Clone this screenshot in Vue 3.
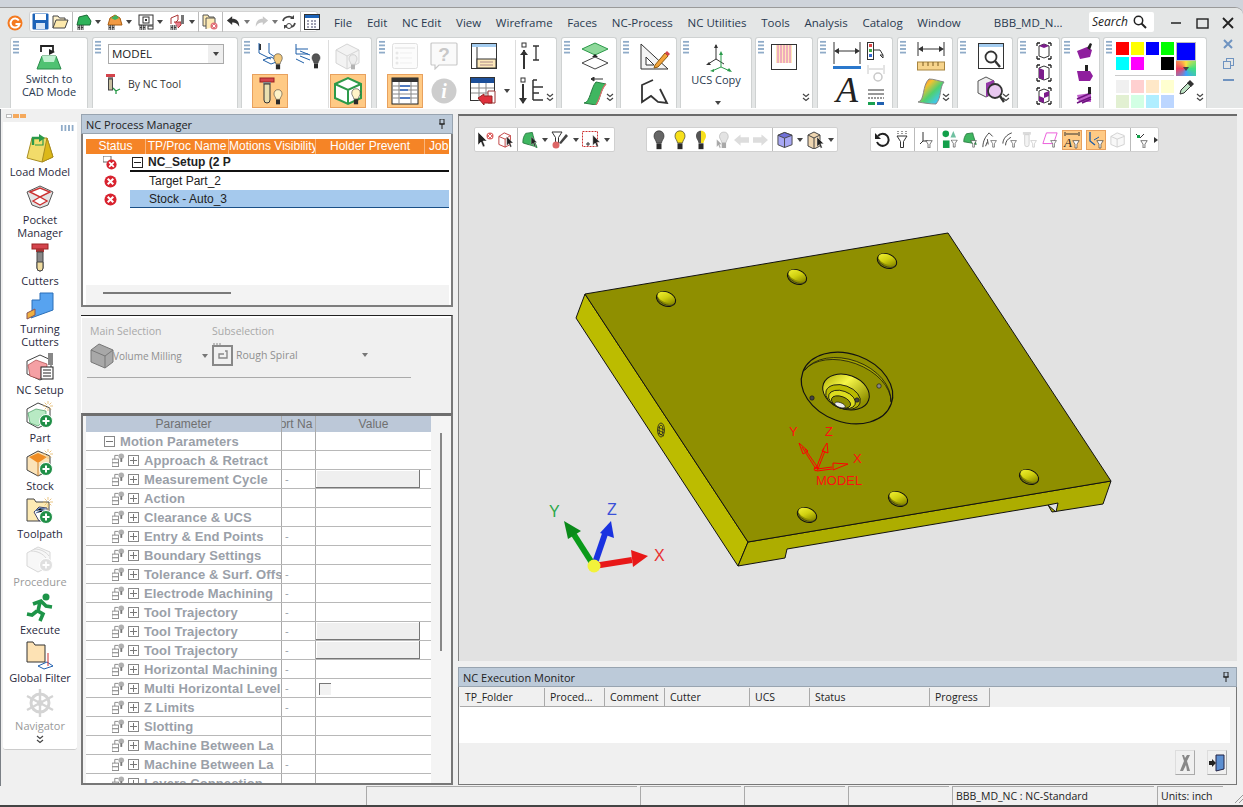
<script setup>
const menus = ['File', 'Edit', 'NC Edit', 'View', 'Wireframe', 'Faces', 'NC-Process', 'NC Utilities', 'Tools', 'Analysis', 'Catalog', 'Window']
const palette = ['#ff0000', '#ffff00', '#0000ff', '#00ff00', '#00ffff', '#ff00ff', '#ffffff', '#000000']
const pastels = ['#f0f0f0', '#ffd0d0', '#ffe8c8', '#ffffd0', '#e2f0d2', '#d2ffe4', '#b0eeff', '#bcd6ff']

const params = [
  { name: 'Approach & Retract' },
  { name: 'Measurement Cycle', port: '-', btn: true },
  { name: 'Action' },
  { name: 'Clearance & UCS' },
  { name: 'Entry & End Points', port: '-' },
  { name: 'Boundary Settings' },
  { name: 'Tolerance & Surf. Offs', port: '-' },
  { name: 'Electrode Machining', port: '-' },
  { name: 'Tool Trajectory', port: '-' },
  { name: 'Tool Trajectory', port: '-', btn: true },
  { name: 'Tool Trajectory', port: '-', btn: true },
  { name: 'Horizontal Machining', port: '-' },
  { name: 'Multi Horizontal Level', port: '-', check: true },
  { name: 'Z Limits', port: '-' },
  { name: 'Slotting' },
  { name: 'Machine Between La' },
  { name: 'Machine Between La', port: '-' },
  { name: 'Layers Connection', port: '-' }
]

const holes = [[666, 299], [797, 277], [887, 261], [1029, 477], [898, 499], [807, 515]]

const monitorCols = [
  { name: 'TP_Folder', cls: 'm1' },
  { name: 'Proced...', cls: 'm2' },
  { name: 'Comment', cls: 'm2' },
  { name: 'Cutter', cls: 'm3' },
  { name: 'UCS', cls: 'm2' },
  { name: 'Status', cls: 'm4' },
  { name: 'Progress', cls: 'm2' }
]
</script>

<template>
  <div class="app">
    <svg class="defs" width="0" height="0">
      <symbol id="bulb" viewBox="0 0 14 24">
        <path d="M7 1C3 1 1 4 1 7.500c0 3 2.500 4.500 3 8h6c.5-3.500 3-5 3-8C13 4 11 1 7 1z" fill="currentColor" stroke="#333" stroke-width=".8" />
        <rect x="4" y="16" width="6" height="7" fill="#2b2b2b" />
      </symbol>
      <symbol id="filter" viewBox="0 0 12 14">
        <path d="M1 1h10L7.500 6.500v6h-3v-6z" fill="#fff" stroke="#333" />
      </symbol>
      <symbol id="more" viewBox="0 0 8 9">
        <path d="M1 1l3 2.500L7 1M1 5l3 2.500L7 5" fill="none" stroke="#444" stroke-width="1.200" />
      </symbol>
      <symbol id="errx" viewBox="0 0 14 14">
        <circle cx="7" cy="7" r="6.500" fill="#d8232f" />
        <path d="M4 4l6 6M10 4l-6 6" stroke="#fff" stroke-width="2.200" />
      </symbol>
      <symbol id="hh" viewBox="0 0 8 6">
        <path d="M1 0v6M3 0v6M1 3h2M5 0v6M7 0v6M5 3h2" stroke="#222" stroke-width="1" />
      </symbol>
      <symbol id="lever" viewBox="0 0 14 15">
        <rect x="0" y="6" width="7" height="4" fill="#fff" stroke="#888" />
        <rect x="0" y="10" width="7" height="4" fill="#fff" stroke="#888" />
        <path d="M3 6V2h4" fill="none" stroke="#888" />
        <circle cx="10" cy="3" r="3" fill="#b0b0b0" />
        <rect x="9" y="5" width="2" height="4" fill="#777" />
      </symbol>
      <symbol id="plus" viewBox="0 0 14 14">
        <circle cx="7" cy="7" r="6.500" fill="#1f8f47" stroke="#fff" />
        <path d="M3.500 7h7M7 3.500v7" stroke="#fff" stroke-width="2" />
      </symbol>
      <symbol id="spark" viewBox="0 0 12 12">
        <path d="M6 0v3.500M6 8.500V12M0 6h3.500M8.500 6H12M2 2l2.500 2.500M10 2L7.500 4.500M2 10l2.500-2.500M10 10L7.500 7.500" stroke="#e6b96a" stroke-width="1" />
      </symbol>
      <symbol id="pointer" viewBox="0 0 10 16">
        <path d="M1 0v13l3-3 2 5 2-1-2-5h4z" fill="#222" stroke="#fff" stroke-width=".5" />
      </symbol>
    </svg>

    <div class="window">
      <header class="titlebar">
        <svg class="logo" width="16" height="16" viewBox="0 0 16 16">
          <circle cx="8" cy="8" r="7.500" fill="#f47a20" />
          <path d="M11.800 5.500A4.500 4.500 0 1 0 12.500 9H8.500" fill="none" stroke="#fff" stroke-width="2" />
        </svg>
        <div class="qat">
          <svg width="17" height="17" viewBox="0 0 17 17"><rect x=".5" y=".5" width="16" height="16" rx="1" fill="#1c63b8" /><rect x="3" y="1" width="11" height="6" fill="#fff" /><rect x="4" y="10" width="9" height="6" fill="#d8e6f5" /></svg>
          <svg width="17" height="16" viewBox="0 0 17 16"><path d="M1 14V2h5l1.500 2H13v2" fill="#fdf0c8" stroke="#444" /><path d="M1 14l3-8h12l-3 8z" fill="#fde9ac" stroke="#444" /></svg>
          <i class="qsep"></i>
          <span class="qi"><svg width="16" height="16" viewBox="0 0 16 16"><path d="M1 11l2-8 8-2 4 6-1 4z" fill="#2eb35a" stroke="#1b6b35" /><use href="#hh" x="1" y="11" width="7" height="5" /></svg><i class="drop"></i></span>
          <span class="qi q2"><svg width="16" height="16" viewBox="0 0 16 16"><path d="M1 11l2-7 5-3 5 3 2 7z" fill="#f29a43" stroke="#a85c10" /><path d="M4 4l5-3 3 3-4 2z" fill="#3fb25e" /><use href="#hh" x="1" y="11" width="7" height="5" /></svg><i class="drop"></i></span>
          <span class="qi q2"><svg width="16" height="16" viewBox="0 0 16 16"><rect x="1" y="1" width="14" height="10" fill="#fff" stroke="#333" /><rect x="5" y="3" width="6" height="6" fill="none" stroke="#333" /><rect x="7" y="5" width="2" height="2" fill="#333" /><use href="#hh" x="1" y="11" width="7" height="5" /><rect x="10" y="12" width="5" height="3" fill="none" stroke="#333" /></svg><i class="drop"></i></span>
          <span class="qi q2"><svg width="17" height="16" viewBox="0 0 17 16"><path d="M2 10V4l7-3v5l-3 3" fill="#fff" stroke="#a33" /><path d="M5 8h7v3l-3 3" fill="#e97a8a" stroke="#a33" /><rect x="12" y="1" width="3" height="9" fill="#777" /><use href="#hh" x="1" y="11" width="7" height="5" /></svg><i class="drop"></i></span>
          <i class="qsep"></i>
          <svg width="17" height="16" viewBox="0 0 17 16"><path d="M1 12V1h5l1 2h5v9z" fill="#fdeab4" stroke="#555" /><path d="M4 15V4h9v9" fill="#fdeab4" stroke="#555" /><circle cx="12" cy="12" r="3.500" fill="#e0707a" /><path d="M10.500 10.500l3 3M13.500 10.500l-3 3" stroke="#fff" /></svg>
          <i class="qsep"></i>
          <span class="qi"><svg width="15" height="13" viewBox="0 0 17 14"><path d="M7 1L1 6l6 5V8c4 0 6 1 8 5 0-6-3-9-8-9z" fill="#333" /></svg><i class="drop grey"></i></span>
          <span class="qi q3"><svg width="15" height="13" viewBox="0 0 17 14"><path d="M10 1l6 5-6 5V8C6 8 4 9 2 13c0-6 3-9 8-9z" fill="#c8c8c8" /></svg><i class="drop grey"></i></span>
          <svg width="16" height="16" viewBox="0 0 16 16"><path d="M2 7a6 5 0 0 1 10-3M14 9a6 5 0 0 1-10 3" fill="none" stroke="#444" stroke-width="1.600" /><path d="M13 1v4H9zM3 15v-4h4z" fill="#444" /><circle cx="8" cy="12" r="2.500" fill="#fff" stroke="#444" /></svg>
          <i class="qsep"></i>
          <svg width="16" height="16" viewBox="0 0 16 16"><rect x=".5" y=".5" width="15" height="15" fill="#fff" stroke="#333" /><rect x="1" y="1" width="14" height="3" fill="#1c63b8" /><path d="M3 7h2M7 7h6M3 10h2M7 10h6M3 13h2M7 13h6" stroke="#446" stroke-dasharray="2 1" /></svg>
        </div>
        <nav class="menu">
          <a v-for="item in menus" :key="item">{{ item }}</a>
        </nav>
        <span class="doc-title">BBB_MD_N...</span>
        <div class="search">
          <em>Search</em>
          <svg width="14" height="14" viewBox="0 0 14 14"><circle cx="5.500" cy="5.500" r="4.200" fill="none" stroke="#222" stroke-width="1.500" /><path d="M8.500 8.500l4.500 4.500" stroke="#222" stroke-width="2" /></svg>
        </div>
        <div class="win-btns">
          <svg width="12" height="12" viewBox="0 0 12 12"><path d="M1 6h10" stroke="#222" stroke-width="1.600" /></svg>
          <svg width="13" height="12" viewBox="0 0 13 12"><rect x="1" y="2" width="11" height="9" fill="none" stroke="#222" stroke-width="1.400" /></svg>
          <svg width="12" height="12" viewBox="0 0 12 12"><path d="M1 1l10 10M11 1L1 11" stroke="#222" stroke-width="1.800" /></svg>
        </div>
      </header>

      <section class="ribbon">
        <div class="group g1">
          <i class="grip"></i>
          <svg class="key" width="30" height="27" viewBox="0 0 30 27">
            <path d="M3 25l5-13h14l5 13z" fill="#4fc272" stroke="#2b8a4b" />
            <path d="M8 12h14l-2 6H10z" fill="#bff0cf" />
            <path d="M7 8V2h12v6" fill="none" stroke="#222" stroke-width="1.800" />
            <path d="M15 5l6 3-6 3z" fill="#222" />
          </svg>
          <div class="g-label">Switch to<br>CAD Mode</div>
        </div>

        <div class="group g2">
          <i class="grip"></i>
          <div class="combo"><span>MODEL</span><b><i class="drop"></i></b></div>
          <div class="by-tool">
            <svg width="16" height="20" viewBox="0 0 16 20"><rect x="1" y="0" width="9" height="3" fill="#d4444c" /><rect x="3" y="3" width="5" height="2" fill="#888" /><rect x="3.500" y="5" width="4" height="11" fill="#c9c0a0" stroke="#444" /><path d="M8 14l3 3M11 17l4-2M11 17v3" stroke="#2a9a4a" stroke-width="1.300" /></svg>
            <span>By NC Tool</span>
          </div>
        </div>

        <div class="group g3">
          <i class="grip"></i>
          <div class="cell">
            <svg width="30" height="28" viewBox="0 0 30 28"><path d="M5 2v6" stroke="#333" stroke-width="2" /><path d="M4 1v10l12 6M14 1v10l6 4" fill="none" stroke="#1f5fa8" /><path d="M8 18l8-3 8 4-8 3z" fill="none" stroke="#1f5fa8" /><use href="#bulb" x="18" y="11" width="10" height="17" style="color:#f2c97e" /></svg>
          </div>
          <div class="cell">
            <svg width="28" height="26" viewBox="0 0 28 26"><path d="M2 1v10M2 6h12M2 11h12M2 16l8 4M6 8l10 4M6 13l10 4" fill="none" stroke="#1f5fa8" /><use href="#bulb" x="17" y="10" width="10" height="16" style="color:#555" /></svg>
          </div>
          <i class="vsep"></i>
          <div class="cell">
            <svg width="30" height="30" viewBox="0 0 30 30" opacity=".35"><path d="M3 9l11-6 12 6v13l-12 6-11-6z" fill="#ddd" stroke="#888" /><path d="M3 9l11 6 12-6M14 15v13" fill="none" stroke="#888" /><use href="#bulb" x="15" y="13" width="10" height="16" style="color:#ccc" /></svg>
          </div>
          <div class="cell on">
            <svg width="30" height="30" viewBox="0 0 30 30"><rect x="5" y="2" width="14" height="4" fill="#d4444c" stroke="#922" /><rect x="8" y="6" width="8" height="2" fill="#888" /><path d="M9 8h6v16a3 3 0 0 1-6 0z" fill="#eadfb0" stroke="#333" /><use href="#bulb" x="18" y="13" width="10" height="16" style="color:#fff3c8" /></svg>
          </div>
          <div class="cell"></div>
          <i class="vsep bare"></i>
          <div class="cell on">
            <svg width="32" height="30" viewBox="0 0 32 30"><path d="M3 8l13-6 13 6v14l-13 6-13-6z" fill="#fff" stroke="#2d9a4a" stroke-width="2" /><path d="M3 8l13 6 13-6M16 14v14" fill="none" stroke="#2d9a4a" stroke-width="2" /><use href="#bulb" x="19" y="12" width="10" height="17" style="color:#fff3c8" /></svg>
          </div>
        </div>

        <div class="group g4">
          <i class="grip"></i>
          <div class="cell">
            <svg width="26" height="26" viewBox="0 0 26 26" opacity=".45"><rect x=".5" y=".5" width="25" height="25" rx="2" fill="#fafafa" stroke="#bbb" /><path d="M3 5h20" stroke="#bbb" /><path d="M8 10h12M8 15h12M8 20h12" stroke="#ddd" /><circle cx="5" cy="10" r="1.500" fill="#ccc" /><circle cx="5" cy="15" r="1.500" fill="#ccc" /><circle cx="5" cy="20" r="1.500" fill="#ccc" /></svg>
          </div>
          <div class="cell">
            <svg width="28" height="28" viewBox="0 0 28 28"><path d="M2 1h24a1 1 0 0 1 1 1v20a1 1 0 0 1-1 1H9l-4 4v-4H2a1 1 0 0 1-1-1V2a1 1 0 0 1 1-1z" fill="#fafafa" stroke="#c8c8c8" stroke-width="1.200" /><text x="14" y="19" class="qmark">?</text></svg>
          </div>
          <div class="cell">
            <svg width="26" height="26" viewBox="0 0 26 26"><rect x=".5" y=".5" width="25" height="25" fill="#fff" stroke="#333" /><rect x="1" y="1" width="24" height="3" fill="#a3ccf0" /><path d="M6 4v21" stroke="#333" /><rect x="6" y="16" width="19" height="9" fill="#fde9ba" stroke="#333" /><path d="M9 19h13M9 22h13" stroke="#a88" /></svg>
          </div>
          <span></span>
          <i class="vsep"></i>
          <div class="cell">
            <svg width="26" height="28" viewBox="0 0 26 28"><rect x="2" y="1" width="4" height="4" fill="none" stroke="#333" /><path d="M4 8v19" stroke="#333" stroke-width="2" /><path d="M0 13l4-5 4 5z" fill="#333" /><path d="M13 4h6M16 4v14M13 18h6" stroke="#333" stroke-width="1.300" fill="none" /></svg>
          </div>
          <div class="cell on">
            <svg width="28" height="28" viewBox="0 0 28 28"><rect x="1" y="1" width="26" height="26" fill="#fff" stroke="#222" /><rect x="1" y="1" width="26" height="4" fill="#333" /><path d="M1 9h26M1 13h26M1 17h26M1 21h26M8 5v22M20 5v22" stroke="#888" /><path d="M9 9h10M9 13h8M9 21h10" stroke="#2b63c0" stroke-width="1.500" /></svg>
          </div>
          <div class="cell">
            <svg width="26" height="26" viewBox="0 0 26 26"><circle cx="13" cy="13" r="12.500" fill="#cdcdcd" /><text x="13" y="20" class="imark">i</text></svg>
          </div>
          <div class="cell">
            <svg width="28" height="28" viewBox="0 0 28 28"><rect x=".5" y=".5" width="24" height="23" fill="#fff" stroke="#333" /><rect x="1" y="1" width="23" height="5" fill="#1c4f9a" /><path d="M1 11h23M1 16h23M9 6v18M16 6v18" stroke="#888" /><path d="M18 14h7v12h-7z" fill="#fff" stroke="#933" /><path d="M8 21l6-4v2h8v7h-8v2z" fill="#e0303c" stroke="#922" /></svg>
          </div>
          <i class="drop side"></i>
          <i class="vsep bare"></i>
          <div class="cell">
            <svg width="28" height="28" viewBox="0 0 28 28"><rect x="2" y="1" width="4" height="4" fill="none" stroke="#333" /><path d="M4 7v19" stroke="#333" stroke-width="2" /><path d="M0 21l4 6 4-6z" fill="#333" /><path d="M14 3v20M14 3h4M14 10h10M14 16h6M14 23h10" stroke="#333" stroke-width="1.500" fill="none" /></svg>
          </div>
          <svg class="more" width="8" height="9"><use href="#more" /></svg>
        </div>

        <div class="group g5">
          <i class="grip"></i>
          <div class="icol">
            <svg width="28" height="28" viewBox="0 0 28 28"><path d="M1 7l13-6 13 6-13 6z" fill="#8ed89a" stroke="#2d9a4a" /><path d="M14 13v8" stroke="#222" stroke-width="1.500" /><path d="M11 15l3-3 3 3z" fill="#222" /><path d="M1 21l13-6 13 6-13 6z" fill="#fff" stroke="#444" /></svg>
            <svg width="26" height="28" viewBox="0 0 26 28"><path d="M2 26c6 0 7-16 12-21l10 2c-6 6-5 14-10 21z" fill="#3fb660" stroke="#2a7d43" /><path d="M24 7c-6 6-5 14-10 21" fill="none" stroke="#e07070" stroke-width="1.200" /><path d="M9 2h12M9 2l3-2v4z" stroke="#333" fill="#333" /></svg>
          </div>
          <svg class="more" width="8" height="9"><use href="#more" /></svg>
        </div>

        <div class="group g6">
          <i class="grip"></i>
          <div class="icol">
            <svg width="30" height="28" viewBox="0 0 30 28"><path d="M1 1v25h27z" fill="#f4f4f4" stroke="#333" /><path d="M6 14v8h8z" fill="#fff" stroke="#333" /><path d="M15 22l10-12 3 3-10 11-4 1z" fill="#f2a33a" stroke="#8a5a10" /><path d="M25 10l2-2 3 3-2 2z" fill="#d4444c" /></svg>
            <svg width="30" height="26" viewBox="0 0 30 26"><path d="M13 2L2 7v17l9-6 7 6 9 1-7-14" fill="none" stroke="#333" stroke-width="1.800" /></svg>
          </div>
        </div>

        <div class="group g7">
          <i class="grip"></i>
          <svg class="ucs" width="28" height="30" viewBox="0 0 28 30"><path d="M11 2v14M11 16L3 21M11 16l8 5" stroke="#333" fill="none" /><path d="M9 5l2-4 2 4zM1 22l3-3 2 3z" fill="#333" /><path d="M16 10v14M16 24l-9 4M16 24l9 4" stroke="#2a9a4a" fill="none" /><path d="M14 12l2-4 2 4zM5 28l4-2 0 3zM27 29l-5-1 2-3z" fill="#2a9a4a" /></svg>
          <div class="g-label">UCS Copy</div>
          <i class="drop ucs-drop"></i>
        </div>

        <div class="group g8">
          <i class="grip"></i>
          <svg class="solo" width="26" height="26" viewBox="0 0 26 26"><rect x=".5" y=".5" width="25" height="25" fill="#fff" stroke="#333" /><rect x="5" y="1" width="16" height="18" fill="#ffe9b8" /><path d="M7 1v18M10 1v18M13 1v18M16 1v18M19 1v18" stroke="#e070c0" /></svg>
          <svg class="more" width="8" height="9"><use href="#more" /></svg>
        </div>

        <div class="group g9">
          <i class="grip"></i>
          <div class="icol wide">
            <svg width="28" height="28" viewBox="0 0 28 28"><path d="M1 0v22M27 0v22" stroke="#333" /><path d="M3 9h22" stroke="#333" /><path d="M1 9l5-3v6zM27 9l-5-3v6z" fill="#333" /><rect y="24" width="28" height="3" fill="#2a78cc" /></svg>
            <span class="big-a">A</span>
          </div>
          <div class="icol narrow">
            <svg width="18" height="18" viewBox="0 0 18 18"><rect x=".5" y=".5" width="6" height="17" fill="#fff" stroke="#333" /><rect x="2" y="2" width="3" height="3" fill="#d44" /><rect x="2" y="7" width="3" height="3" fill="#4a4" /><rect x="2" y="12" width="3" height="3" fill="#36c" /><path d="M7 8h6l3 5M16 13l-3 0 3 3z" stroke="#333" fill="none" /></svg>
            <svg width="18" height="18" viewBox="0 0 18 18" opacity=".35"><path d="M1 0v9M17 0v9M2 4h14" stroke="#666" /><circle cx="11" cy="12" r="4" fill="none" stroke="#666" stroke-width="1.500" /></svg>
            <svg width="18" height="18" viewBox="0 0 18 18"><path d="M1 2h16M1 6h16" stroke="#333" /><path d="M1 10h16" stroke="#333" stroke-dasharray="2 1" /><rect x="1" y="14" width="7" height="3" fill="#18a050" /><rect x="10" y="14" width="7" height="3" fill="#2060b0" /></svg>
          </div>
        </div>

        <div class="group g10">
          <i class="grip"></i>
          <div class="icol">
            <svg width="28" height="30" viewBox="0 0 28 30"><path d="M1 0v14M27 0v14M3 7h22" stroke="#333" /><path d="M1 7l5-3v6zM27 7l-5-3v6z" fill="#333" /><rect x=".5" y="20" width="27" height="8" fill="#f7d48c" stroke="#a88540" /><path d="M6 20v4M11 20v4M16 20v4M21 20v4" stroke="#7a5a20" /></svg>
            <svg width="28" height="28" viewBox="0 0 28 28">
              <defs><linearGradient id="rainbow" x1="0" y1="0" x2="1" y2="1"><stop offset="0" stop-color="#f04040" /><stop offset=".3" stop-color="#f6c030" /><stop offset=".55" stop-color="#50d070" /><stop offset=".8" stop-color="#40c8e8" /><stop offset="1" stop-color="#4a70e0" /></linearGradient></defs>
              <path d="M1 25c7-1 4-17 11-23 5 0 10 2 15 3-5 6-2 15-8 22-6 0-12-1-18-2z" fill="url(#rainbow)" stroke="#888" />
            </svg>
          </div>
          <svg class="more" width="8" height="9"><use href="#more" /></svg>
        </div>

        <div class="group g11">
          <i class="grip"></i>
          <div class="icol">
            <svg width="26" height="26" viewBox="0 0 26 26"><rect x=".5" y=".5" width="25" height="25" fill="#fff" stroke="#333" /><rect x="1" y="1" width="24" height="3" fill="#a3ccf0" /><circle cx="13" cy="14" r="5.500" fill="none" stroke="#333" stroke-width="1.800" /><path d="M17 18l5 6" stroke="#333" stroke-width="2.400" /></svg>
            <svg width="28" height="28" viewBox="0 0 28 28"><path d="M1 5l8-4 8 4v12l-8 4-8-4z" fill="#eee" stroke="#555" /><path d="M9 7l8-3v13l-8 4z" fill="#9438a6" /><circle cx="18" cy="15" r="7" fill="#e8c8f0" stroke="#333" stroke-width="1.800" /><path d="M23 20l4 6" stroke="#333" stroke-width="2.400" /></svg>
          </div>
          <svg class="more" width="8" height="9"><use href="#more" /></svg>
        </div>

        <div class="group g12">
          <i class="grip"></i>
          <div class="icol tri">
            <svg v-for="n in 3" :key="n" width="16" height="18" viewBox="0 0 16 18">
              <path d="M1 1h3M12 1h3M1 1v3M15 1v3M1 17h3M12 17h3M1 14v3M15 14v3" stroke="#222" stroke-width="1.300" fill="none" />
              <path d="M3 4l5-2 5 2v10l-5 2-5-2z" fill="#fff" stroke="#333" />
              <path v-if="n === 1" d="M3 4l5-2 5 2-5 2z" fill="#7c1d8c" />
              <path v-if="n === 2" d="M3 4l5 2v10l-5-2z" fill="#7c1d8c" />
              <path v-if="n === 3" d="M3 9l5 2v5l-5-2zM8 6l5-2v5l-5 2z" fill="#7c1d8c" />
            </svg>
          </div>
        </div>

        <div class="group g13">
          <i class="grip"></i>
          <div class="icol tri">
            <svg width="18" height="17" viewBox="0 0 18 17"><path d="M1 8l10-4 5 3-2 7-10 2z" fill="#8f1f9e" /><path d="M11 5l3-5 2 1-2 6z" fill="#222" /></svg>
            <svg width="18" height="17" viewBox="0 0 18 17"><path d="M1 6l13 0 3 5-3 5H3z" fill="#8f1f9e" /><rect x="9" y="0" width="3" height="6" fill="#222" /></svg>
            <svg width="18" height="17" viewBox="0 0 18 17"><path d="M1 8l14-2v9H3z" fill="#c060cc" /><path d="M1 12l14-6M1 16l14-6M6 16l9-4" stroke="#6f1480" stroke-width="1.500" /><rect x="12" y="0" width="3" height="7" fill="#222" /></svg>
          </div>
        </div>

        <div class="group g14">
          <i class="grip"></i>
          <div class="colors">
            <div class="swatches">
              <span v-for="c in palette" :key="c" :style="{ background: c }"></span>
            </div>
            <hr>
            <div class="swatches pale">
              <span v-for="c in pastels" :key="c" :style="{ background: c }"></span>
            </div>
          </div>
          <div class="current">
            <span class="cur-blue"></span>
            <span class="cur-rainbow"><i class="drop"></i></span>
            <svg width="17" height="17" viewBox="0 0 17 17"><path d="M2 15l1-4 7-7 3 3-7 7z" fill="#bde3c4" stroke="#333" /><path d="M9 4l3-3 4 4-3 3z" fill="#333" /></svg>
          </div>
          <svg class="more" width="8" height="9"><use href="#more" /></svg>
        </div>

        <div class="mdi-btns">
          <svg width="10" height="10" viewBox="0 0 10 10"><path d="M1 1l8 8M9 1L1 9" stroke="#6f93c0" stroke-width="2" /></svg>
          <svg width="11" height="11" viewBox="0 0 11 11"><rect x="3.500" y=".5" width="7" height="7" fill="none" stroke="#6f93c0" /><rect x=".5" y="3.500" width="7" height="7" fill="#e4e6e6" stroke="#6f93c0" /></svg>
          <svg width="11" height="4" viewBox="0 0 11 4"><path d="M0 2h11" stroke="#6f93c0" stroke-width="2" /></svg>
        </div>
      </section>

      <main class="main">
        <aside class="sidebar">
          <div class="side-tabs"><i class="off"></i><i></i><i></i></div>
          <div class="side-tools">
            <i class="side-grip"></i>
            <div class="tool">
              <svg width="30" height="30" viewBox="0 0 30 30"><path d="M2 24L7 4h15l6 19-11 5z" fill="#f2dc6a" stroke="#a88c20" /><path d="M17 28L22 4l6 19z" fill="#dcb818" stroke="#a88c20" /><path d="M8 11V4h8" fill="none" stroke="#2a9a4a" stroke-width="2.400" /><path d="M14 0l6 4-6 4z" fill="#2a9a4a" /><path d="M18 5v6h-8" fill="none" stroke="#2a9a4a" stroke-width="1.200" /></svg>
              <span>Load Model</span>
            </div>
            <div class="tool">
              <svg width="28" height="24" viewBox="0 0 28 24"><path d="M1 7l13-6 13 6-5 13-8 3-8-3z" fill="#e4e4e4" stroke="#555" /><path d="M4 7l10-4 10 4-10 5z" fill="#fff" stroke="#c33" stroke-width="1.400" /><path d="M7 16l7-4 7 4-7 4z" fill="#fff" stroke="#c33" stroke-width="1.400" /></svg>
              <span>Pocket<br>Manager</span>
            </div>
            <div class="tool">
              <svg width="18" height="28" viewBox="0 0 18 28"><rect x="1" y="0" width="16" height="5" fill="#d4444c" stroke="#922" /><rect x="5" y="5" width="8" height="3" fill="#a33" /><path d="M6 8h6v16a3 3 0 0 1-6 0z" fill="#888" stroke="#444" /><path d="M6 18h6v6a3 3 0 0 1-6 0z" fill="#f0dca0" stroke="#444" /></svg>
              <span>Cutters</span>
            </div>
            <div class="tool">
              <svg width="28" height="28" viewBox="0 0 28 28"><path d="M6 20V8h8V1h13v17L5 26z" fill="#57a3f0" stroke="#2a6fb8" /><path d="M1 21l8-4v6l-8 4z" fill="#f0b040" stroke="#855" /></svg>
              <span>Turning<br>Cutters</span>
            </div>
            <div class="tool">
              <svg width="28" height="28" viewBox="0 0 28 28"><path d="M1 8l13-6 11 5v14l-11 6L1 21z" fill="#fff" stroke="#444" /><path d="M2 12l8-5 11 4v10l-8 5-9-3z" fill="#f5a0a4" stroke="#933" stroke-width=".6" /><rect x="22" y="0" width="5" height="12" fill="#888" /><rect x="15" y="14" width="12" height="12" fill="#fff" stroke="#222" /><path d="M17 17h8M17 20h8M17 23h8" stroke="#222" /></svg>
              <span>NC Setup</span>
            </div>
            <div class="tool">
              <svg width="28" height="28" viewBox="0 0 28 28"><path d="M1 8l11-6 12 5v14l-12 6L1 21z" fill="#fff" stroke="#444" /><path d="M2 12l8-4 10 2v8l-8 7-8-3z" fill="#b8eac4" stroke="#2d8a4a" stroke-width=".6" /><use href="#spark" x="17" y="0" width="10" height="10" /><use href="#plus" x="13" y="13" width="14" height="14" /></svg>
              <span>Part</span>
            </div>
            <div class="tool">
              <svg width="28" height="28" viewBox="0 0 28 28"><path d="M1 8l11-6 12 5v14l-12 6L1 21z" fill="#fbe3b8" stroke="#444" /><path d="M3 8l9-4 9 4-9 6z" fill="#ef8c24" /><path d="M12 14v13" stroke="#c98030" /><use href="#spark" x="17" y="0" width="10" height="10" /><use href="#plus" x="13" y="13" width="14" height="14" /></svg>
              <span>Stock</span>
            </div>
            <div class="tool">
              <svg width="28" height="28" viewBox="0 0 28 28"><path d="M1 24V2h7l2 3h13v19z" fill="#fdeab4" stroke="#444" /><path d="M8 15l5-5 8 1v8l-8 5z" fill="#fff" stroke="#446" /><path d="M9 14l5-3 6 1M10 16l5-3 5 1" stroke="#5a7fb8" /><use href="#spark" x="17" y="0" width="10" height="10" /><use href="#plus" x="13" y="13" width="14" height="14" /></svg>
              <span>Toolpath</span>
            </div>
            <div class="tool off">
              <svg width="28" height="28" viewBox="0 0 28 28" opacity=".45"><path d="M1 8l11-6 12 5v14l-12 6L1 21z" fill="#eee" stroke="#aaa" /><path d="M8 4c7 0 12 3 15 7M5 6c7 0 12 3 15 7" fill="none" stroke="#aaa" /><circle cx="20" cy="20" r="6.500" fill="#bbb" stroke="#fff" /><path d="M16.500 20h7M20 16.500v7" stroke="#fff" stroke-width="1.800" /></svg>
              <span>Procedure</span>
            </div>
            <div class="tool">
              <svg width="28" height="28" viewBox="0 0 28 28"><circle cx="20" cy="4" r="3.500" fill="#1d9448" /><path d="M7 11l8-3 5 5 6 1M14 9l-2 9 5 3 -3 7M11 18l-5 4-5-1" fill="none" stroke="#1d9448" stroke-width="3.600" /></svg>
              <span>Execute</span>
            </div>
            <div class="tool">
              <svg width="28" height="28" viewBox="0 0 28 28"><path d="M1 21V1h6l2 3h10v17z" fill="#fde2b4" stroke="#333" /><path d="M12 25l9-4 6 4-9 3z" fill="none" stroke="#2060b0" /><path d="M22 12v13" stroke="#c33" /></svg>
              <span>Global Filter</span>
            </div>
            <div class="tool off">
              <svg width="28" height="30" viewBox="0 0 28 30"><circle cx="14" cy="15" r="9" fill="none" stroke="#d4d4d4" stroke-width="3" /><circle cx="14" cy="15" r="3" fill="#d4d4d4" /><path d="M14 1v28M1 8l26 14M27 8L1 22" stroke="#d4d4d4" stroke-width="2.400" /></svg>
              <span>Navigator</span>
            </div>
            <svg class="side-more" width="8" height="9"><use href="#more" /></svg>
          </div>
        </aside>

        <section class="left-panel">
          <div class="pane-head">
            <span>NC Process Manager</span>
            <svg width="8" height="10" viewBox="0 0 8 10"><path d="M2 0h4v5H2zM1 5h6M4 5v5" fill="none" stroke="#222" /></svg>
          </div>
          <div class="process">
            <div class="proc-head">
              <span class="p1">Status</span>
              <span class="p2">TP/Proc Name</span>
              <span class="p3">Motions Visibility</span>
              <span class="p4">Holder Prevent</span>
              <span class="p5">Job</span>
            </div>
            <div class="proc-row">
              <span class="proc-status"><svg width="14" height="14" viewBox="0 0 14 14"><rect x="0" y="0" width="8" height="6" fill="#fff" stroke="#666" /><use href="#errx" x="3" y="3" width="11" height="11" /></svg></span>
              <span class="proc-name setup"><i class="box minus"></i><b>NC_Setup (2 P</b></span>
            </div>
            <div class="proc-row">
              <span class="proc-status"><svg width="13" height="13"><use href="#errx" /></svg></span>
              <span class="proc-name indent">Target Part_2</span>
            </div>
            <div class="proc-row">
              <span class="proc-status"><svg width="13" height="13"><use href="#errx" /></svg></span>
              <span class="proc-name indent picked">Stock - Auto_3</span>
            </div>
            <div class="proc-space"></div>
            <div class="proc-scroll"><i></i></div>
          </div>

          <div class="selection">
            <div class="sel-col first">
              <label>Main Selection</label>
              <div class="sel-val">
                <svg width="24" height="26" viewBox="0 0 24 26"><path d="M1 7l8-6 14 6v12l-8 6-14-6z" fill="#a8a8a8" stroke="#777" /><path d="M1 7l14 6 8-6M15 13v12" fill="none" stroke="#777" /></svg>
                <span class="vol">Volume Milling</span>
                <i class="drop grey"></i>
              </div>
            </div>
            <div class="sel-col">
              <label>Subselection</label>
              <div class="sel-val">
                <svg width="21" height="23" viewBox="0 0 21 23"><path d="M1 1h8" stroke="#888" stroke-dasharray="2 1" /><rect x="1" y="3" width="19" height="19" fill="none" stroke="#888" stroke-width="2" /><path d="M13 8h2v7H7v-4h5" fill="none" stroke="#888" stroke-width="1.400" /></svg>
                <span>Rough Spiral</span>
                <i class="drop grey far"></i>
              </div>
            </div>
            <hr>
          </div>

          <div class="params">
            <div class="param-table">
              <div class="param-row head">
                <span class="pc-a">Parameter</span>
                <span class="pc-b"><em>ort Na</em></span>
                <span class="pc-c">Value</span>
              </div>
              <div class="param-row">
                <span class="pc-a top"><i class="box minus"></i>Motion Parameters</span>
                <span class="pc-b"></span>
                <span class="pc-c"></span>
              </div>
              <div v-for="(p, i) in params" :key="i" class="param-row">
                <span class="pc-a">
                  <svg class="lever" width="13" height="15"><use href="#lever" /></svg>
                  <i class="box plus"></i>
                  <span class="pname">{{ p.name }}</span>
                </span>
                <span class="pc-b dash">{{ p.port }}</span>
                <span class="pc-c">
                  <i v-if="p.btn" class="val-btn"></i>
                  <i v-if="p.check" class="val-check"></i>
                </span>
              </div>
            </div>
            <div class="vscroll"><i></i></div>
          </div>
        </section>

        <section class="right">
          <div class="viewport">
            <svg class="scene" width="779" height="547" viewBox="458 114 779 547">
              <defs>
                <linearGradient id="holeFill" x1="0" y1="0" x2="1" y2=".5">
                  <stop offset="0" stop-color="#f4f438" />
                  <stop offset=".6" stop-color="#d0d010" />
                  <stop offset="1" stop-color="#9c9c00" />
                </linearGradient>
                <linearGradient id="bore" x1="0" y1="0" x2="1" y2=".4">
                  <stop offset="0" stop-color="#a8a800" />
                  <stop offset=".45" stop-color="#f6f648" />
                  <stop offset="1" stop-color="#8f8f00" />
                </linearGradient>
              </defs>
              <path d="M585 294L576 318L738 566L748 542z" fill="#bcbc00" stroke="#111" />
              <path d="M748 542L738 566L785 558L787 549L1048 505L1052 512L1103 504L1111 481z" fill="#adad00" stroke="#111" />
              <path d="M1048 505L1058 503L1056 512z" fill="#e2e2e2" stroke="#111" />
              <path d="M585 294L948 233L1111 481L748 542z" fill="#8f8f00" stroke="#111" />

              <g v-for="h in holes" :key="h[0]" :transform="`translate(${h[0]} ${h[1]}) rotate(22)`">
                <ellipse rx="10" ry="7" fill="#8f8f00" stroke="#111" />
                <ellipse cx="-.5" cy="-1.500" rx="9" ry="5" fill="url(#holeFill)" />
                <path d="M-9 1.500a9.500 5.500 0 0 0 18 .5" fill="none" stroke="#222" stroke-width=".6" />
              </g>

              <g transform="translate(847 388) rotate(20)">
                <ellipse rx="47" ry="34" fill="#8f8f00" stroke="#111" stroke-width="1.200" />
                <path d="M-46 -2a47 33 0 0 1 92 0a47 30 0 0 0 -92 0z" fill="#a8a800" stroke="#111" stroke-width=".7" />
              </g>
              <g transform="translate(846 392) rotate(20)">
                <ellipse rx="24" ry="17" fill="url(#bore)" stroke="#111" />
              </g>
              <ellipse cx="843" cy="397" rx="18" ry="11.500" transform="rotate(20 843 397)" fill="#b9b900" stroke="#111" stroke-width=".8" />
              <ellipse cx="842" cy="399.500" rx="14" ry="8.500" transform="rotate(20 842 399.500)" fill="#dcdc20" stroke="#111" stroke-width=".8" />
              <ellipse cx="841" cy="402" rx="10" ry="5.500" transform="rotate(20 841 402)" fill="#8f8f00" stroke="#111" stroke-width=".8" />
              <ellipse cx="840" cy="405" rx="5.500" ry="2.400" transform="rotate(20 840 405)" fill="#eee" stroke="#111" stroke-width=".6" />
              <g fill="#444" stroke="#111" stroke-width=".6">
                <circle cx="812" cy="398" r="2.200" />
                <circle cx="879" cy="386" r="2.200" fill="#888" />
                <circle cx="857" cy="400" r="2.200" />
              </g>

              <g transform="translate(661 430)" fill="none" stroke="#222" stroke-width=".8">
                <ellipse rx="3.500" ry="7" />
                <ellipse rx="2" ry="5" />
                <path d="M-3 -3l6 3M-3 0l6 3M-3 3l6 3" />
              </g>

              <g fill="none" stroke="#ff0000">
                <path d="M816 469L802 447M818 468L805 449M816 469L824 448M818 469L825 451M817 469L832 467M817 471L832 469" />
                <path d="M799 443L808 451L803 454zM827 443L828 453L822 451zM848 464L833 463L833 470z" />
                <circle cx="816" cy="469" r="1.800" />
              </g>
              <g class="ucs-text">
                <text x="789" y="436">Y</text>
                <text x="825" y="436">Z</text>
                <text x="853" y="463">X</text>
                <text x="816" y="485">MODEL</text>
              </g>

              <g>
                <path d="M594 566L571 530" stroke="#0a9a1a" stroke-width="6" />
                <path d="M564 521L581 531L568 539z" fill="#0a8a1a" />
                <path d="M594 566L606 531" stroke="#1a32e0" stroke-width="6" />
                <path d="M611 521L614 538L600 533z" fill="#1a32e0" />
                <path d="M594 566L632 560" stroke="#e81818" stroke-width="6" />
                <path d="M648 556L631 550L633 567z" fill="#e81818" />
                <circle cx="594" cy="566" r="6.500" fill="#f2f23a" />
              </g>
              <text x="549" y="517" class="axis" fill="#2ba84a">Y</text>
              <text x="607" y="515" class="axis" fill="#3a50d8">Z</text>
              <text x="654" y="561" class="axis" fill="#e83030">X</text>
            </svg>

            <div class="vtool t1">
              <svg width="18" height="16" viewBox="0 0 18 16"><use href="#pointer" width="10" height="16" /><circle cx="13" cy="4" r="3.500" fill="#d66" /><path d="M11 2l4 4M15 2l-4 4" stroke="#fff" /></svg>
              <svg width="16" height="18" viewBox="0 0 18 18"><path d="M1 5l6-4 7 3v10l-6 3-7-3z" fill="#fff" stroke="#b33" /><path d="M1 5l7 3v9M8 8l6-4" fill="none" stroke="#b33" /><use href="#pointer" x="9" y="5" width="8" height="13" /></svg>
              <i class="tsep"></i>
              <span class="qi"><svg width="17" height="18" viewBox="0 0 18 18"><path d="M2 12c0-5 1-7 3-10l7-1c1 4 2 9 5 16-6-3-10-3-15-5z" fill="#3fb660" stroke="#2a7d43" /><use href="#pointer" x="10" y="5" width="7" height="12" /></svg><i class="drop"></i></span>
              <span class="qi"><svg width="18" height="18" viewBox="0 0 18 18"><use href="#filter" width="12" height="14" /><circle cx="5" cy="14" r="3.500" fill="#d66" /><path d="M8 12l7-9 2 2-7 8z" fill="#444" /></svg><i class="drop"></i></span>
              <span class="qi"><svg width="18" height="18" viewBox="0 0 18 18"><rect x=".5" y=".5" width="15" height="15" fill="none" stroke="#c33" stroke-dasharray="2 1" /><use href="#pointer" x="10" y="4" width="8" height="13" /><path d="M4 13h4M6 11v4" stroke="#333" /></svg><i class="drop"></i></span>
            </div>

            <div class="vtool t2">
              <svg class="bulb" width="12" height="20" style="color:#666"><use href="#bulb" /></svg>
              <svg class="bulb" width="12" height="20" style="color:#f7e01a"><use href="#bulb" /></svg>
              <svg class="bulb" width="12" height="20" viewBox="0 0 14 24"><path d="M7 1C3 1 1 4 1 7.500c0 3 2.500 4.500 3 8h3z" fill="#555" /><path d="M7 1c4 0 6 3 6 6.500c0 3-2.500 4.500-3 8H7z" fill="#f7e01a" /><rect x="4" y="16" width="6" height="7" fill="#2b2b2b" /></svg>
              <svg width="14" height="20" viewBox="0 0 16 20" opacity=".4"><use href="#bulb" x="3" width="12" height="20" style="color:#bbb" /><use href="#pointer" y="9" width="7" height="11" /></svg>
              <svg width="15" height="12" viewBox="0 0 16 12"><path d="M0 6l7-6v3h9v6H7v3z" fill="#ddd" /></svg>
              <svg width="15" height="12" viewBox="0 0 16 12"><path d="M16 6L9 0v3H0v6h9v3z" fill="#ddd" /></svg>
              <i class="tsep"></i>
              <span class="qi"><svg width="16" height="18" viewBox="0 0 17 18"><path d="M1 4l7-3 8 3v10l-8 3-7-3z" fill="#a8a8f4" stroke="#444" /><path d="M1 4l7 3 8-3-8-3z" fill="#7070d8" stroke="#444" /><path d="M8 7v10" stroke="#444" /></svg><i class="drop"></i></span>
              <span class="qi"><svg width="17" height="18" viewBox="0 0 17 18"><path d="M1 4l6-3 6 3v11l-6 3-6-3z" fill="#eed5b0" stroke="#444" /><path d="M7 7v11M1 4l6 3 6-3" fill="none" stroke="#444" /><use href="#pointer" x="9" y="6" width="8" height="12" /></svg><i class="drop"></i></span>
            </div>

            <div class="vtool t3">
              <svg width="15" height="16" viewBox="0 0 15 16"><path d="M3 4a6 6 0 1 1-1 6" fill="none" stroke="#222" stroke-width="2" /><path d="M0 1v6h6z" fill="#222" /></svg>
              <svg width="16" height="18" viewBox="0 0 16 18"><path d="M4 0v3M8 0v3M12 0v3" stroke="#333" stroke-dasharray="1 1" /><use href="#filter" x="2" y="4" width="12" height="14" /></svg>
              <i class="tsep"></i>
              <svg width="14" height="17" viewBox="0 0 14 17"><path d="M4 1v9M4 10l-3 3M4 10h5" stroke="#333" fill="none" /><use href="#filter" x="6" y="9" width="8" height="9" /></svg>
              <i class="tsep"></i>
              <svg width="16" height="19" viewBox="0 0 17 20"><circle cx="4" cy="4" r="3.500" fill="#12a04a" /><path d="M12 1l-3 7h6z" fill="#6fc0a0" /><rect x="1" y="11" width="7" height="8" fill="#12a04a" /><use href="#filter" x="9" y="10" width="8" height="9" /></svg>
              <svg width="16" height="16" viewBox="0 0 18 18"><path d="M2 11c0-4 1-6 3-9l7-1c1 4 2 7 4 13-5-2-9-2-14-3z" fill="#3fb660" stroke="#2a7d43" /><use href="#filter" x="9" y="9" width="8" height="9" /></svg>
              <svg width="16" height="16" viewBox="0 0 18 18"><path d="M1 17c0-7 3-12 7-16l4 4M4 16l2-5M6 8l1 6" fill="none" stroke="#333" /><use href="#filter" x="9" y="9" width="8" height="9" /></svg>
              <svg width="16" height="16" viewBox="0 0 18 18"><path d="M1 13c0-5 4-10 10-12M4 15c0-4 2-7 6-9" fill="none" stroke="#333" /><use href="#filter" x="9" y="9" width="8" height="9" /></svg>
              <svg width="16" height="16" viewBox="0 0 18 18" opacity=".35"><rect x="1" y="0" width="9" height="3" fill="#999" /><path d="M3 3h5v11a2.500 2.500 0 0 1-5 0z" fill="#ddd" stroke="#777" /><use href="#filter" x="9" y="9" width="8" height="9" /></svg>
              <svg width="16" height="16" viewBox="0 0 18 18"><path d="M5 1h12l-4 12H1z" fill="#fff" stroke="#e94ed8" /><use href="#filter" x="9" y="9" width="8" height="9" /></svg>
              <span class="ton"><svg width="18" height="18" viewBox="0 0 18 18"><path d="M2 1v4M16 1v4M3 3h12" stroke="#333" /><text x="1" y="16" class="ton-a">A</text><use href="#filter" x="9" y="9" width="8" height="9" /></svg></span>
              <span class="ton"><svg width="18" height="18" viewBox="0 0 18 18"><path d="M3 1v9l5 4" fill="none" stroke="#1f5fa8" stroke-width="1.400" /><path d="M7 9l5-3" stroke="#1f5fa8" /><use href="#filter" x="9" y="9" width="8" height="9" /></svg></span>
              <svg width="16" height="16" viewBox="0 0 18 18" opacity=".4"><path d="M1 5l7-4 8 3v10l-8 3-7-3z" fill="#eee" stroke="#888" /><path d="M1 5l7 3 8-3M8 8v9" fill="none" stroke="#888" /></svg>
              <i class="tsep"></i>
              <svg width="15" height="16" viewBox="0 0 15 16"><path d="M1 2l4 4M9 2L5 6" stroke="#333" /><rect x="2" y="3" width="3" height="3" fill="#14a04a" /><use href="#filter" x="5" y="8" width="8" height="9" /></svg>
              <i class="tarrow"></i>
            </div>
          </div>

          <div class="monitor">
            <div class="pane-head">
              <span>NC Execution Monitor</span>
              <svg width="8" height="10" viewBox="0 0 8 10"><path d="M2 0h4v5H2zM1 5h6M4 5v5" fill="none" stroke="#222" /></svg>
            </div>
            <div class="mon-head">
              <span v-for="c in monitorCols" :key="c.name" :class="c.cls">{{ c.name }}</span>
            </div>
            <div class="mon-body"></div>
            <div class="mon-foot">
              <span class="mon-btn">
                <svg width="12" height="18" viewBox="0 0 12 18"><path d="M3 1l2 6-4 10h3l3-6 1 6h3L8 7l3-6H8L6 4 5 1z" fill="#888" /></svg>
              </span>
              <span class="mon-btn">
                <svg width="16" height="18" viewBox="0 0 16 18"><path d="M7 1h8v14l-8 2z" fill="#5d8fd0" stroke="#224" /><path d="M0 7h3V5l4 4-4 4v-2H0z" fill="#222" /></svg>
              </span>
            </div>
          </div>
        </section>
      </main>

      <footer class="status">
        <span class="s1"></span>
        <span class="s2"></span>
        <span class="s2"></span>
        <span class="s2"></span>
        <span class="s3">BBB_MD_NC : NC-Standard</span>
        <span class="s4">Units: inch</span>
        <svg width="14" height="14" viewBox="0 0 14 14"><path d="M13 4L4 13M13 8l-5 5M13 12l-1 1" stroke="#999" /></svg>
      </footer>
    </div>
  </div>
</template>

<style>
html, body {
  margin: 0;
  background: #cfd4db;
}
</style>

<style scoped>
.app {
  width: 1243px;
  height: 807px;
  overflow: hidden;
  padding-top: 7px;
  box-sizing: border-box;
  background: #cfd4db;
  font-family: "Liberation Sans", Arial, sans-serif;
  color: #222;
}
.defs {
  position: absolute;
}
.window {
  height: 800px;
  display: flex;
  flex-direction: column;
  background: #f0f0f0;
  border-top: 1px solid #9a9a9a;
  border-top-right-radius: 8px;
  overflow: hidden;
  box-sizing: border-box;
}
i {
  font-style: normal;
}

/* barre de titre */
.titlebar {
  height: 29px;
  flex: none;
  display: flex;
  align-items: center;
  background: #e4e6e6;
  padding-left: 7px;
}
.logo {
  flex: none;
  margin-right: 6px;
}
.qat {
  width: 289px;
  height: 21px;
  flex: none;
  box-sizing: border-box;
  margin-top: -2px;
  display: flex;
  align-items: center;
  gap: 3px;
  padding-left: 2px;
  background: #fff;
  border: 1px solid #d2d2d2;
  border-radius: 3px;
}
.qat svg, .vtool svg, .qi svg {
  flex: none;
}
.qsep {
  width: 1px;
  height: 20px;
  flex: none;
  background: #bbb;
}
.qi {
  display: flex;
  align-items: center;
  gap: 4px;
  flex: none;
}
.qat .qi {
  gap: 3px;
}
.q2 {
  margin-left: 3px;
}
.q3 {
  margin-left: 1px;
}
.drop {
  display: inline-block;
  flex: none;
  width: 0;
  height: 0;
  border: 3px solid transparent;
  border-top: 4px solid #444;
  border-bottom: 0;
}
.drop.grey {
  border-top-color: #777;
}
.menu {
  display: flex;
  flex: none;
  gap: 14.700px;
  margin-left: 16px;
  font-family: "Open Sans", sans-serif;
  font-size: 11.500px;
  color: #2a3a50;
  white-space: nowrap;
}
.doc-title {
  font-family: "Open Sans", sans-serif;
  font-size: 11.500px;
  color: #2a3a50;
  margin-left: 33px;
  flex: none;
  white-space: nowrap;
}
.search {
  width: 65px;
  height: 20px;
  flex: none;
  margin-left: auto;
  margin-top: -2px;
  box-sizing: border-box;
  display: flex;
  align-items: center;
  justify-content: space-between;
  padding: 0 7px 0 3px;
  background: #fff;
  border-radius: 2px;
  font-family: "Open Sans", sans-serif;
  font-size: 12px;
}
.win-btns {
  width: 89px;
  flex: none;
  box-sizing: border-box;
  display: flex;
  align-items: center;
  justify-content: space-between;
  padding: 0 9px 0 16px;
}

/* ruban */
.ribbon {
  height: 71px;
  flex: none;
  display: flex;
  gap: 4px;
  padding-left: 10px;
  background: #e4e6e6;
  position: relative;
}
.group {
  height: 71px;
  box-sizing: border-box;
  flex: none;
  position: relative;
  display: flex;
  background: #fff;
  border: 1px solid #cfd2d2;
  border-bottom: 0;
  border-radius: 3px 3px 0 0;
}
.grip {
  position: absolute;
  left: 2px;
  top: 2px;
  width: 6px;
  height: 14px;
  background: radial-gradient(circle at center, #8fabc8 1.200px, transparent 1.300px) 0 0 / 3px 3.600px;
}
.g-label {
  font-family: "Open Sans", sans-serif;
  font-size: 11px;
  line-height: 13px;
  color: #2a3a50;
  text-align: center;
  white-space: nowrap;
}
.g1 {
  width: 78px;
  flex-direction: column;
  align-items: center;
  padding-top: 6px;
}
.key {
  flex: none;
  margin-bottom: 1px;
}
.g2 {
  width: 146px;
  flex-direction: column;
  padding: 6px 0 0 15px;
}
.combo {
  width: 116px;
  height: 20px;
  box-sizing: border-box;
  display: flex;
  justify-content: space-between;
  border: 1px solid #aaa;
  font-family: "Open Sans", sans-serif;
  font-size: 11.500px;
  line-height: 18px;
  padding-left: 3px;
}
.combo b {
  width: 15px;
  background: #eee;
  display: flex;
  align-items: center;
  justify-content: center;
}
.by-tool {
  display: flex;
  align-items: center;
  gap: 7px;
  margin: 10px 0 0 -3px;
  font-family: "Open Sans", sans-serif;
  font-size: 10.500px;
  color: #333;
}
.g3 {
  width: 131px;
  margin-left: -1px;
  display: grid;
  grid-template-columns: 36px 38px 1px 36px;
  grid-template-rows: 36px 34px;
  column-gap: 1px;
  padding-left: 10px;
}
.g4 {
  width: 181px;
  display: grid;
  grid-template-columns: 36px 40px 38px 10px 1px 32px;
  grid-template-rows: 36px 34px;
  padding-left: 10px;
  column-gap: 1px;
}
.vsep {
  width: 1px;
  background: #ddd;
  height: 36px;
  margin-top: 2px;
}
.vsep.bare {
  height: 34px;
  margin-top: 0;
}
.drop.side {
  align-self: center;
}
.cell {
  display: flex;
  align-items: center;
  justify-content: center;
}
.cell svg {
  flex: none;
}
.cell.on {
  background: #ffca85;
  box-shadow: inset 0 0 0 1px #e8a15e;
}
.more {
  position: absolute;
  right: 2px;
  bottom: 6px;
}
.icol {
  width: 100%;
  height: 70px;
  display: flex;
  flex-direction: column;
  align-items: center;
  justify-content: space-around;
  box-sizing: border-box;
  padding: 1px 0 0;
}
.icol svg {
  flex: none;
}
.g5, .g6 {
  padding-left: 12px;
}
.g5 {
  width: 56px;
}
.g6 {
  width: 57px;
  margin-left: -1px;
}
.g7 {
  width: 72px;
  margin-left: -1px;
  flex-direction: column;
  align-items: center;
  padding-top: 5px;
}
.ucs {
  flex: none;
  margin-bottom: 0;
  margin-left: 6px;
}
.ucs-drop {
  position: absolute;
  left: 34px;
  bottom: 3px;
}
.g8 {
  width: 58px;
  margin-left: -1px;
  padding: 6px 0 0 15px;
}
.solo {
  flex: none;
}
.g9 {
  width: 76px;
  padding-left: 15px;
}
.icol.wide {
  width: 28px;
  flex: none;
}
.icol.narrow {
  width: 18px;
  flex: none;
  margin-left: 6px;
}
.big-a {
  font-family: "Liberation Serif", serif;
  font-size: 36px;
  font-style: italic;
  line-height: 30px;
  color: #222;
}
.g10, .g11 {
  width: 56px;
  padding-left: 12px;
}
.g12 {
  width: 43px;
  padding-left: 11px;
}
.g13 {
  width: 39px;
  margin-left: -3px;
  padding-left: 8px;
}
.icol.tri {
  padding: 2px 0 1px;
}
.g14 {
  width: 104px;
  margin-left: -1px;
  padding: 4px 0 0 12px;
}
.colors {
  width: 58px;
}
.swatches {
  display: grid;
  grid-template-columns: repeat(4, 13px);
  gap: 2px;
}
.swatches span {
  height: 13px;
}
.colors hr {
  border: 0;
  border-top: 1px solid #ccc;
  margin: 5px 0 4px -1px;
}
.current {
  display: flex;
  flex-direction: column;
  align-items: center;
  margin-left: 2px;
  width: 20px;
}
.cur-blue {
  width: 18px;
  height: 17px;
  background: #0000ff;
  border: 1px solid #bbb;
  flex: none;
}
.cur-rainbow {
  width: 20px;
  height: 15px;
  flex: none;
  margin-bottom: 3px;
  background: conic-gradient(#ffe040, #40e080, #40a0ff, #f04060, #ffe040);
  display: flex;
  align-items: center;
  justify-content: center;
}
.mdi-btns {
  width: 22px;
  margin-left: 6px;
  padding-top: 2px;
  display: flex;
  flex-direction: column;
  align-items: center;
  gap: 9px;
}

/* zone principale */
.main {
  flex: 1;
  min-height: 0;
  display: flex;
  padding: 6px 0 1px;
  background: #f0f0f0;
  box-shadow: inset 0 1px 0 #fff, inset 1px 0 0 #7a7f85;
}
.sidebar {
  width: 81px;
  flex: none;
  padding-left: 3px;
  box-sizing: border-box;
}
.side-tabs {
  display: flex;
  gap: 1px;
  height: 6px;
  margin: 0 0 2px 3px;
}
.side-tabs i {
  width: 6px;
  height: 4px;
  background: #f5a95c;
}
.side-tabs i.off {
  background: #fff;
  border: 1px solid #bbb;
  box-sizing: border-box;
}
.side-tools {
  width: 74px;
  height: 628px;
  box-sizing: border-box;
  padding-top: 12px;
  position: relative;
  background: #fff;
  border-bottom: 1px solid #ccc;
  border-radius: 0 0 3px 3px;
  display: flex;
  flex-direction: column;
  align-items: center;
}
.side-grip {
  position: absolute;
  top: 3px;
  right: 2px;
  width: 15px;
  height: 6px;
  background: radial-gradient(circle at center, #8fabc8 1.100px, transparent 1.200px) 0 0 / 3.600px 3px;
}
.tool {
  display: flex;
  flex-direction: column;
  align-items: center;
  padding-bottom: 4px;
}
.tool svg {
  height: 30px;
  flex: none;
}
.tool span {
  font-family: "Open Sans", sans-serif;
  font-size: 11px;
  line-height: 13px;
  margin-top: 1px;
  text-align: center;
  color: #2a2a40;
  white-space: nowrap;
}
.tool.off span {
  color: #9a9a9a;
}
.side-more {
  flex: none;
  margin-top: -1px;
}

/* panneau gauche */
.left-panel {
  width: 372px;
  flex: none;
  display: flex;
  flex-direction: column;
}
.pane-head {
  height: 20px;
  flex: none;
  box-sizing: border-box;
  display: flex;
  align-items: center;
  justify-content: space-between;
  padding: 0 6px 0 4px;
  background: #bccad9;
  border: 1px solid #98a4b0;
  font-family: "Open Sans", sans-serif;
  font-size: 11px;
  color: #222;
}
.process {
  height: 173px;
  flex: none;
  box-sizing: border-box;
  border: 2px solid #7d7d7d;
  border-top: 0;
  background: #fff;
  padding: 5px 2px 0 3px;
  display: flex;
  flex-direction: column;
  overflow: hidden;
}
.proc-head {
  display: flex;
  height: 15px;
  flex: none;
  background: #f58426;
  color: #fff;
  font-size: 12px;
  line-height: 15px;
  text-align: center;
  white-space: nowrap;
  overflow: hidden;
}
.proc-head span {
  flex: none;
  overflow: hidden;
  border-right: 1px solid #fff6;
  box-sizing: border-box;
}
.p1 { width: 60px; }
.p2 { width: 83px; }
.p3 { width: 87px; }
.p4 { width: 109px; }
.p5 { width: 25px; text-align: left; padding-left: 4px; }
.proc-row {
  display: flex;
  height: 18px;
  flex: none;
  font-size: 12px;
  line-height: 18px;
}
.proc-status {
  width: 44px;
  flex: none;
  display: flex;
  align-items: center;
  justify-content: center;
  padding-left: 4px;
  box-sizing: border-box;
}
.proc-name {
  flex: 1;
  display: flex;
  align-items: center;
  box-sizing: border-box;
}
.proc-name.setup {
  border-bottom: 2px solid #111;
  overflow: hidden;
  white-space: nowrap;
}
.proc-name.setup b {
  margin-left: 5px;
}
.proc-name.indent {
  padding-left: 19px;
}
.proc-name.picked {
  background: #a5c9ed;
  border-bottom: 1px solid #1a4f86;
}
.proc-space {
  flex: 1;
}
.proc-scroll {
  height: 20px;
  flex: none;
  padding: 7px 0 0 17px;
  box-sizing: border-box;
  background: #f3f3f3;
}
.proc-scroll i {
  display: block;
  width: 128px;
  height: 2px;
  background: #7a7a7a;
}
.box {
  width: 11px;
  height: 11px;
  flex: none;
  box-sizing: border-box;
  position: relative;
  margin-left: 2px;
  border: 1px solid #222;
  background: #fff;
}
.box::before {
  content: "";
  position: absolute;
  left: 1px;
  right: 1px;
  top: 4px;
  height: 1px;
  background: #222;
}
.box.plus::after {
  content: "";
  position: absolute;
  top: 1px;
  bottom: 1px;
  left: 4px;
  width: 1px;
  background: #777;
}
.selection {
  height: 98px;
  margin-top: 8px;
  flex: none;
  box-sizing: border-box;
  border-top: 1px solid #222;
  border-right: 2px solid #777;
  position: relative;
  display: flex;
  padding: 8px 0 0 9px;
  background: #f0f0f0;
  font-size: 11px;
  color: #9a9a9a;
  box-shadow: inset 1px 2px 0 #fff;
}
.selection label {
  display: block;
  font-family: "Open Sans", sans-serif;
  font-size: 10.500px;
  color: #a8a8a8;
  margin-bottom: 5px;
}
.sel-col.first {
  width: 122px;
}
.sel-val {
  display: flex;
  align-items: center;
  font-family: "Open Sans", sans-serif;
  font-size: 10.500px;
  color: #8f8f8f;
  white-space: nowrap;
}
.sel-val svg {
  flex: none;
}
.sel-val svg + span {
  margin-left: 3px;
}
.sel-val .vol {
  margin-left: -1px;
  font-size: 10px;
}
.sel-val .drop {
  margin-left: 20px;
}
.sel-val .drop.far {
  margin-left: 64px;
}
.selection hr {
  position: absolute;
  left: 6px;
  top: 61px;
  width: 324px;
  border: 0;
  border-top: 1px solid #aaa;
  margin: 0;
}
.params {
  flex: 1;
  min-height: 0;
  display: flex;
  background: #f4f4f4;
  box-sizing: border-box;
  border: 2px solid #777;
  border-top: 3px solid #6e6e6e;
  padding-left: 3px;
  overflow: hidden;
}
.param-table {
  width: 345px;
  flex: none;
  background: #fff;
  color: #9aa0a8;
}
.param-row {
  display: grid;
  grid-template-columns: 196px 34px 115px;
  height: 19px;
  box-sizing: border-box;
  border-bottom: 1px solid #b8b8b8;
}
.param-row.head {
  height: 16px;
  background: #bcc8d8;
  color: #707070;
  font-size: 12px;
  line-height: 16px;
  text-align: center;
  border-bottom: 0;
}
.param-row > span {
  border-right: 1px solid #aaa;
  overflow: hidden;
  white-space: nowrap;
}
.param-row > span:last-child {
  border-right: 0;
}
.pc-b em {
  font-style: normal;
  margin-left: -5px;
  display: inline-block;
}
.pc-a {
  display: flex;
  align-items: center;
  font-size: 13px;
  font-weight: bold;
  letter-spacing: .1px;
}
.head .pc-a {
  justify-content: center;
  font-size: 12px;
  font-weight: normal;
  letter-spacing: 0;
}
.param-row .box {
  border-color: #888;
  margin-left: 3px;
}
.param-row .box::before {
  background: #777;
}
.pc-a.top {
  padding-left: 15px;
}
.pc-a.top .box {
  margin-right: 5px;
}
.lever {
  margin-left: 26px;
  flex: none;
}
.pname {
  margin-left: 5px;
}
.dash {
  font-size: 11px;
  line-height: 18px;
  padding-left: 3px;
}
.pc-c {
  display: block;
}
.val-btn {
  display: block;
  width: 104px;
  height: 18px;
  box-sizing: border-box;
  background: #efefef;
  border-right: 1px solid #777;
  border-bottom: 1px solid #777;
  box-shadow: inset 1px 1px 0 #fff;
}
.val-check {
  display: block;
  width: 12px;
  height: 12px;
  margin: 4px 0 0 3px;
  box-sizing: border-box;
  background: #f2f2f2;
  border-top: 1px solid #777;
  border-left: 1px solid #777;
}
.vscroll {
  flex: 1;
  padding: 17px 0 0 9px;
}
.vscroll i {
  display: block;
  width: 2px;
  height: 218px;
  background: #888;
}

/* partie droite */
.right {
  width: 779px;
  flex: none;
  margin-left: 5px;
  display: flex;
  flex-direction: column;
  gap: 6px;
  box-sizing: border-box;
}
.viewport {
  flex: 1;
  position: relative;
  min-height: 0;
  background: #e2e2e2;
  border-top: 2px solid #6b6b6b;
  border-left: 1px solid #888;
  overflow: hidden;
}
.scene {
  position: absolute;
  left: -1px;
  top: -2px;
}
.ucs-text text {
  font-family: "Liberation Sans", sans-serif;
  font-size: 13px;
  fill: #ff1010;
}
.axis {
  font-family: "Liberation Sans", sans-serif;
  font-size: 16px;
}
.vtool {
  position: absolute;
  top: 11px;
  height: 25px;
  box-sizing: border-box;
  display: flex;
  align-items: center;
  background: #fff;
  border: 1px solid #d0d0d0;
  border-radius: 2px;
}
.vtool.t1 {
  left: 15px;
  width: 141px;
  gap: 3px;
  padding-left: 2px;
}
.vtool.t2 {
  left: 187px;
  width: 192px;
  gap: 4px;
  padding-left: 6px;
}
.vtool .bulb {
  margin-right: 5px;
}
.vtool.t3 {
  left: 411px;
  width: 289px;
  gap: 4px;
  padding-left: 4px;
}
.tsep {
  width: 1px;
  height: 23px;
  flex: none;
  background: #bbb;
}
.ton {
  display: flex;
  flex: none;
  padding: 1px;
  background: #ffca85;
  box-shadow: inset 0 0 0 1px #e8a15e;
}
.ton-a {
  font-family: "Liberation Serif", serif;
  font-size: 13px;
  font-style: italic;
  fill: #222;
}
.qmark {
  font-family: "Liberation Sans", sans-serif;
  font-size: 19px;
  font-weight: bold;
  fill: #c8c8c8;
  text-anchor: middle;
}
.imark {
  font-family: "Liberation Serif", serif;
  font-size: 20px;
  font-weight: bold;
  font-style: italic;
  fill: #fff;
  text-anchor: middle;
}
.tarrow {
  width: 0;
  height: 0;
  flex: none;
  border: 3px solid transparent;
  border-left: 4px solid #333;
  border-right: 0;
}
.monitor {
  height: 118px;
  flex: none;
  display: flex;
  flex-direction: column;
  box-sizing: border-box;
  border: 1px solid #777;
  border-top: 0;
}
.monitor .pane-head {
  margin: 0 -1px;
}
.mon-head {
  height: 19px;
  flex: none;
  display: flex;
  margin-top: 1px;
  background: #f0f0f0;
  font-family: "Open Sans", sans-serif;
  font-size: 10.500px;
  line-height: 19px;
  padding-left: 1px;
}
.mon-head span {
  box-sizing: border-box;
  padding-left: 5px;
  border-right: 1px solid #aaa;
  border-bottom: 1px solid #aaa;
}
.m1 { width: 85px; }
.m2 { width: 60px; }
.m3 { width: 85px; }
.m4 { width: 120px; }
.mon-body {
  height: 36px;
  flex: none;
  background: #fff;
  margin-right: 6px;
}
.mon-foot {
  flex: 1;
  display: flex;
  justify-content: flex-end;
  gap: 12px;
  padding: 7px 9px 0 0;
}
.mon-btn {
  width: 20px;
  height: 25px;
  box-sizing: border-box;
  display: flex;
  align-items: center;
  justify-content: center;
  background: #f0f0f0;
  border: 1px solid #ddd;
  border-right-color: #aaa;
  border-bottom-color: #aaa;
}

/* barre d'état */
.status {
  height: 19px;
  flex: none;
  display: flex;
  gap: 3px;
  padding-left: 366px;
  font-family: "Open Sans", sans-serif;
  font-size: 10.500px;
  line-height: 18px;
  color: #222;
  background: #f0f0f0;
  border-bottom: 2px solid #444;
  box-sizing: content-box;
}
.status span {
  flex: none;
  box-sizing: border-box;
  border-top: 1px solid #aaa;
  border-left: 1px solid #aaa;
  padding-left: 3px;
}
.s1 { width: 271px; }
.s2 { width: 101px; }
.s3 { width: 202px; }
.s4 { width: 66px; }
.status svg {
  flex: none;
  margin: 4px 0 0 5px;
}
</style>
